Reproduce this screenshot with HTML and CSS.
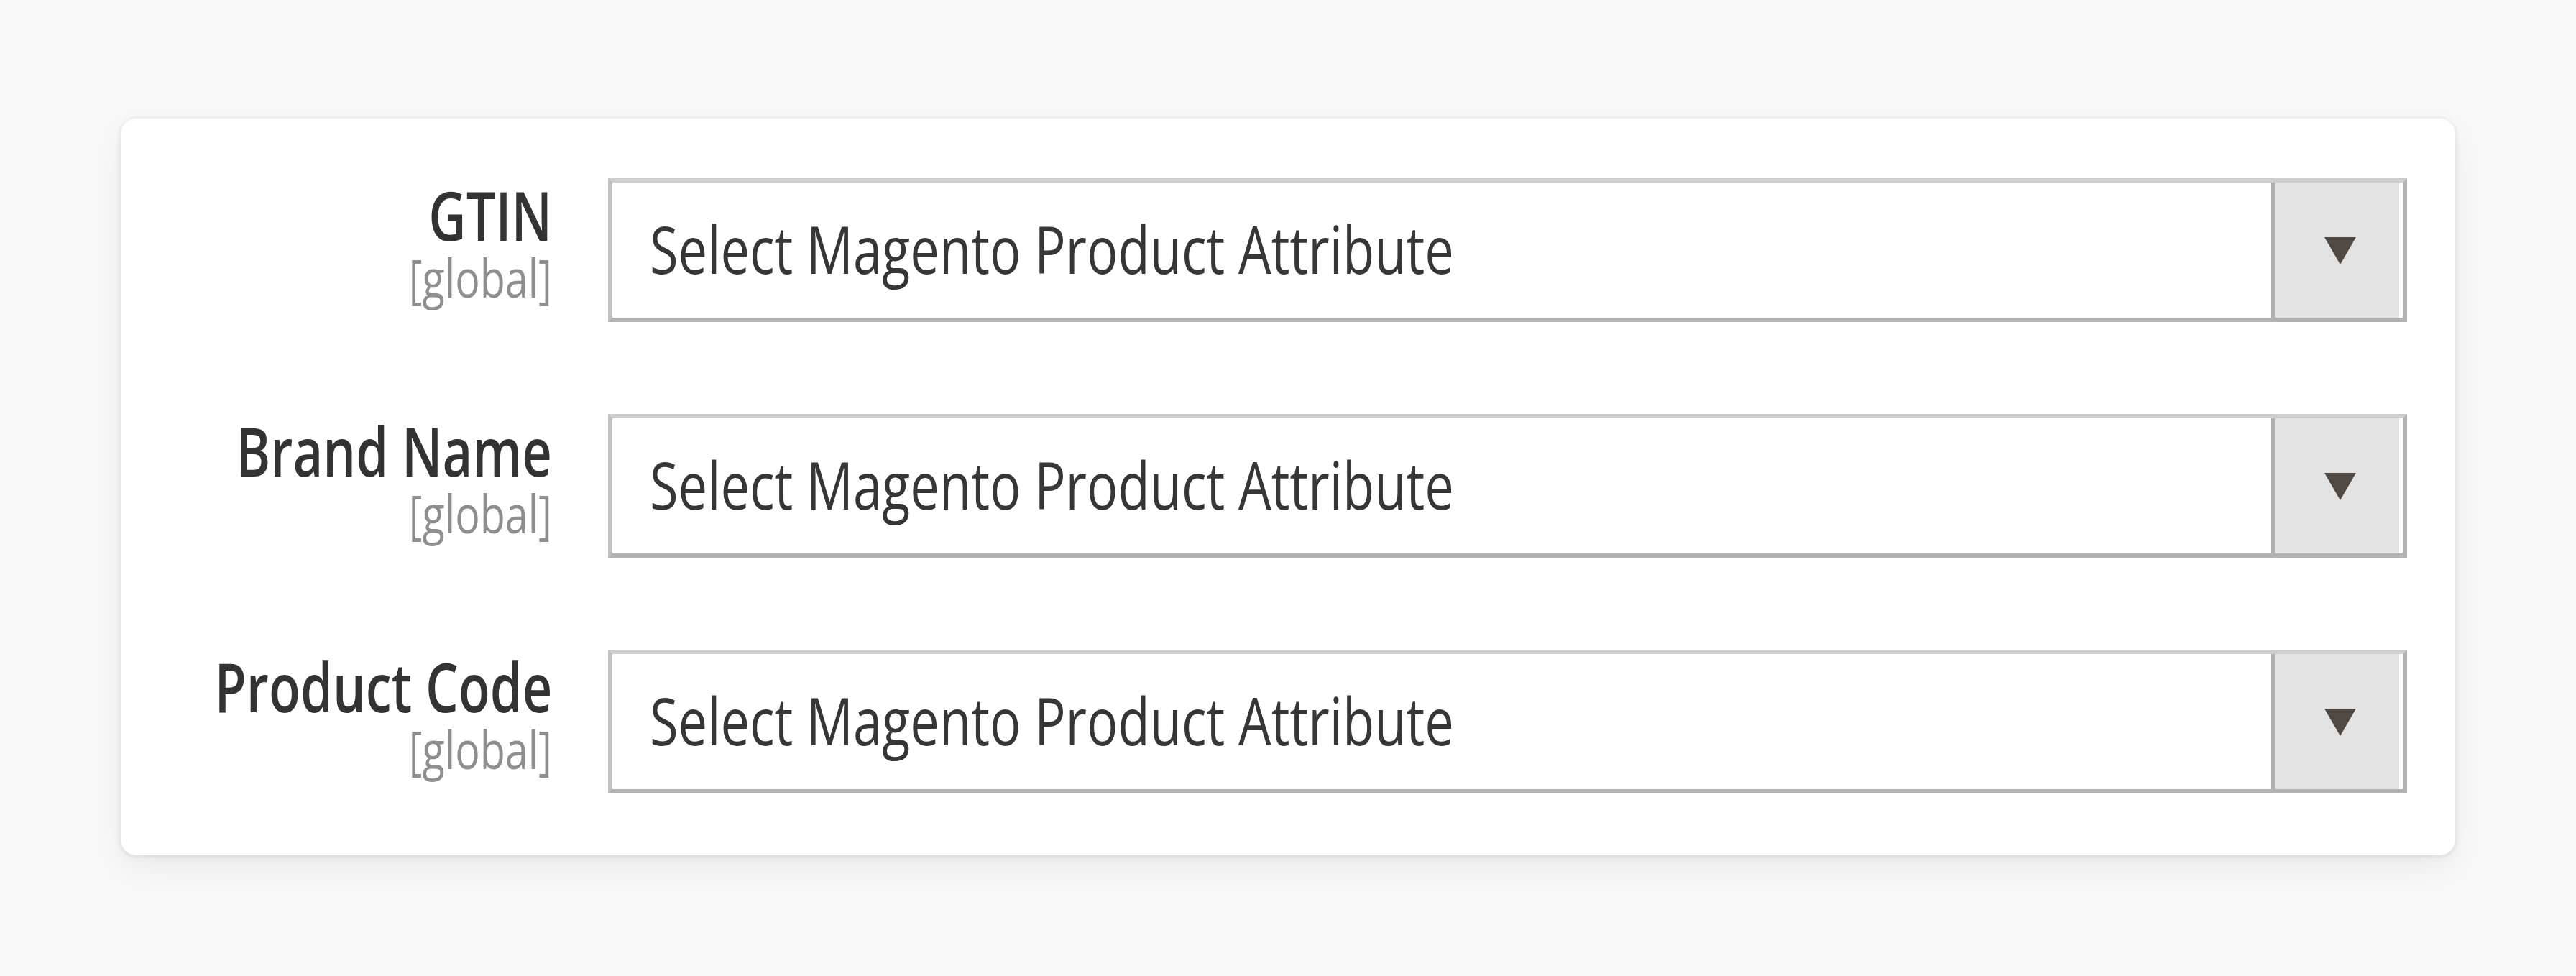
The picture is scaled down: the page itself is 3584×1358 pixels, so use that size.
FILE: index.html
```html
<!DOCTYPE html>
<html lang="en">
<head>
    <meta charset="UTF-8">
    <meta name="viewport" content="width=device-width, initial-scale=1.0">
    <title>Product Attribute Mapping</title>
    <link rel="stylesheet" href="styles.css">
</head>
<body>
    <div class="page">
        <div class="config-card">
            <div class="field-row">
                <div class="field-label">
                    <span class="label-text">GTIN</span>
                    <span class="scope">[global]</span>
                </div>
                <div class="select">
                    <span class="select-value"><span class="select-text">Select Magento Product Attribute</span></span>
                    <span class="select-arrow">
                        <svg width="44" height="38" viewBox="0 0 44 38"><polygon points="0,0 44,0 22,38" fill="#514943"></polygon></svg>
                    </span>
                </div>
            </div>

            <div class="field-row">
                <div class="field-label">
                    <span class="label-text">Brand Name</span>
                    <span class="scope">[global]</span>
                </div>
                <div class="select">
                    <span class="select-value"><span class="select-text">Select Magento Product Attribute</span></span>
                    <span class="select-arrow">
                        <svg width="44" height="38" viewBox="0 0 44 38"><polygon points="0,0 44,0 22,38" fill="#514943"></polygon></svg>
                    </span>
                </div>
            </div>

            <div class="field-row">
                <div class="field-label">
                    <span class="label-text">Product Code</span>
                    <span class="scope">[global]</span>
                </div>
                <div class="select">
                    <span class="select-value"><span class="select-text">Select Magento Product Attribute</span></span>
                    <span class="select-arrow">
                        <svg width="44" height="38" viewBox="0 0 44 38"><polygon points="0,0 44,0 22,38" fill="#514943"></polygon></svg>
                    </span>
                </div>
            </div>
        </div>
    </div>
</body>
</html>
```

FILE: styles.css
```css
* {
    margin: 0;
    padding: 0;
    box-sizing: border-box;
}

body {
    font-family: 'Open Sans', 'DejaVu Sans', sans-serif;
    background: #f8f8f8;
    color: #303030;
    min-height: 100vh;
}

.page {
    padding-top: 165px;
}

.config-card {
    width: 3248px;
    margin: 0 auto;
    background: #ffffff;
    border-radius: 22px;
    padding: 83px 67px 86px 0;
    display: flex;
    flex-direction: column;
    gap: 128px;
    box-shadow: 0 0 0 4px rgba(0, 0, 0, 0.025), 0 4px 10px rgba(0, 0, 0, 0.035), 0 18px 44px rgba(0, 0, 0, 0.06);
}

.field-row {
    display: grid;
    grid-template-columns: 600px 1fr;
    column-gap: 78px;
}

/* the source shot is squeezed sideways, so the text is narrowed to match */
.field-label {
    display: flex;
    flex-direction: column;
    align-items: flex-end;
    padding-top: 3px;
}

.label-text,
.scope {
    display: inline-block;
    white-space: nowrap;
    transform-origin: right center;
}

.label-text {
    font-size: 95px;
    line-height: 95px;
    font-weight: 600;
    color: #333333;
    transform: scaleX(0.76);
}

.scope {
    margin-top: 3px;
    font-size: 74px;
    line-height: 74px;
    color: #8e8e8e;
    transform: scaleX(0.775);
}

.select {
    height: 200px;
    display: flex;
    align-items: stretch;
    border: 6px solid #c2c2c2;
    border-top-color: #cecece;
    border-bottom-color: #b2b2b2;
    border-right-color: #b2b2b2;
    background: #ffffff;
}

.select-value {
    flex: 1;
    display: flex;
    align-items: center;
    padding-left: 52px;
    padding-bottom: 4px;
    font-size: 92px;
    line-height: 1;
    color: #363636;
}

.select-text {
    display: inline-block;
    white-space: nowrap;
    transform: scaleX(0.785);
    transform-origin: left center;
}

.select-arrow {
    width: 178px;
    margin-right: 5px;
    border-left: 5px solid #b0b0b0;
    background: #e3e3e3;
    display: flex;
    align-items: center;
    justify-content: center;
    padding-top: 2px;
    padding-left: 8px;
}
```
